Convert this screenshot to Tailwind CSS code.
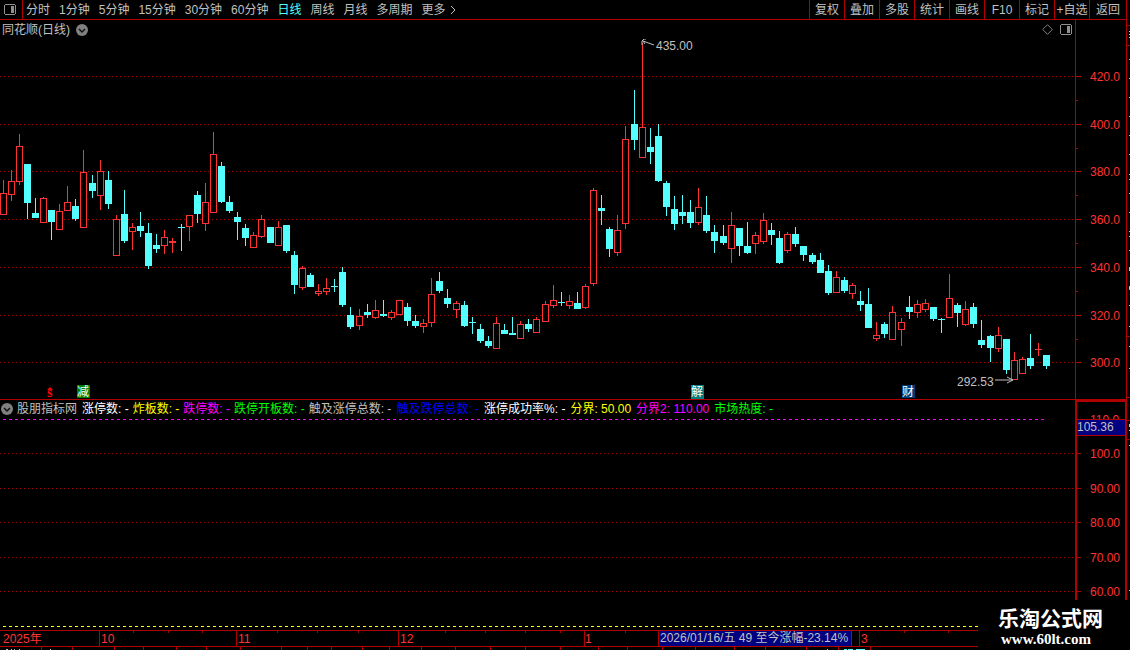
<!DOCTYPE html>
<html lang="zh-CN">
<head>
    <meta charset="UTF-8">
    <meta name="viewport" content="width=device-width, initial-scale=1.0">
    <title>同花顺(日线)</title>
    <script src="https://cdn.jsdelivr.net/npm/@tailwindcss/browser@4"></script>
</head>
<body class="bg-black text-[#c0c0c0] text-[12px] leading-[18px] font-['Liberation_Sans','Noto_Sans_CJK_SC',sans-serif] overflow-hidden">
    <div class="flex min-h-screen">
        <div class="flex-1 min-w-0 flex flex-col">

            <!-- toolbar -->
            <header class="flex justify-between h-5 border-b border-[#b00000] whitespace-nowrap">
                <nav class="flex">
                    <button type="button" aria-label="侧栏" class="w-[23px] pl-1 border-r border-[#b00000]">
                        <svg width="12" height="11" viewBox="0 0 12 11" shape-rendering="crispEdges">
                            <path d="M1 0h10v1h1v9h-1v1h-10v-1h-1v-9h1zM1 1v9h10v-9z" fill="#909090" fill-rule="evenodd"/>
                            <rect x="7" y="2" width="3" height="7" fill="#909090"/>
                        </svg>
                    </button>
                    <div class="flex gap-[9px] pl-[3px]">
                        <button type="button">分时</button>
                        <button type="button">1分钟</button>
                        <button type="button">5分钟</button>
                        <button type="button">15分钟</button>
                        <button type="button">30分钟</button>
                        <button type="button">60分钟</button>
                        <button type="button" class="text-[#54ffff]">日线</button>
                        <button type="button">周线</button>
                        <button type="button">月线</button>
                        <button type="button">多周期</button>
                        <button type="button" class="flex items-center gap-1">更多
                            <svg width="6" height="10" viewBox="0 0 6 10" fill="none" stroke="#c0c0c0"><path d="M1 1l4 4-4 4"/></svg>
                        </button>
                    </div>
                </nav>
                <div class="flex">
                    <button type="button" class="w-[35px] border-l border-[#b00000]">复权</button>
                    <button type="button" class="w-[35px] border-l border-[#b00000]">叠加</button>
                    <button type="button" class="w-[35px] border-l border-[#b00000]">多股</button>
                    <button type="button" class="w-[35px] border-l border-[#b00000]">统计</button>
                    <button type="button" class="w-[35px] border-l border-[#b00000]">画线</button>
                    <button type="button" class="w-[35px] border-l border-[#b00000]">F10</button>
                    <button type="button" class="w-[35px] border-l border-[#b00000]">标记</button>
                    <button type="button" class="w-[35px] border-l border-[#b00000]">+自选</button>
                    <button type="button" class="w-[37px] border-l border-[#b00000]">返回</button>
                </div>
            </header>

            <!-- daily candles -->
            <section class="flex h-[380px] border-b border-[#b00000]">
                <div class="flex-1 min-w-0 flex flex-col">
                    <div class="flex items-center justify-between h-[19px] pl-[2px] pr-[3px]">
                        <div class="flex items-center gap-[6px]">
                            <h1>同花顺(日线)</h1>
                            <button type="button" aria-label="展开">
                                <svg class="block" width="12" height="12" viewBox="0 0 12 12"><circle cx="6" cy="6" r="6" fill="#808080"/><path d="M3 5l3 3 3-3" fill="none" stroke="#111" stroke-width="1.5"/></svg>
                            </button>
                        </div>
                        <div class="flex items-center gap-[7px]">
                            <svg width="11" height="11" viewBox="0 0 11 11" fill="none" stroke="#808080"><path d="M5.5 .7L10.3 5.5 5.5 10.3 .7 5.5z"/></svg>
                            <svg width="12" height="11" viewBox="0 0 12 11" shape-rendering="crispEdges">
                                <path d="M1 0h10v1h1v9h-1v1h-10v-1h-1v-9h1zM1 1v9h10v-9z" fill="#909090" fill-rule="evenodd"/>
                                <rect x="7" y="2" width="3" height="7" fill="#909090"/>
                            </svg>
                        </div>
                    </div>
                    <svg class="block w-full h-[360px]">
                        <defs>
                            <pattern id="dots" width="4" height="1" patternUnits="userSpaceOnUse"><rect width="1" height="1" fill="#b00000"/></pattern>
                        </defs>
                        <g transform="translate(0 -39)" shape-rendering="crispEdges">
                            <g fill="url(#dots)">
                                <rect y="76" width="100%" height="1"/>
                                <rect y="124" width="100%" height="1"/>
                                <rect y="171" width="100%" height="1"/>
                                <rect y="219" width="100%" height="1"/>
                                <rect y="267" width="100%" height="1"/>
                                <rect y="315" width="100%" height="1"/>
                                <rect y="362" width="100%" height="1"/>
                            </g>
                            <g id="candles"></g>
                        </g>
                        <g transform="translate(0 -39)">
                            <g fill="none" stroke="#c0c0c0">
                                <path d="M643 41l11 4M642 45v-4l2-2h2M643 41l2 3"/>
                                <path d="M995 380h18M1007 377l6 3-6 3"/>
                            </g>
                            <g fill="#c0c0c0">
                                <text x="656" y="50">435.00</text>
                                <text x="957" y="386">292.53</text>
                            </g>
                            <path d="M47 390l3-3 3 3z" fill="#ff0000"/>
                            <text x="47" y="397" fill="#ff0000" class="font-['Liberation_Serif',serif] font-bold text-[14px]">s</text>
                            <rect x="77" y="385" width="13" height="13" fill="#008000"/>
                            <rect x="691" y="385" width="13" height="14" fill="#008080"/>
                            <rect x="902" y="385" width="13" height="13" fill="#003c78"/>
                            <g fill="#ffffff">
                                <text x="77" y="396">减</text>
                                <text x="691" y="396">解</text>
                                <text x="902" y="396">财</text>
                            </g>
                        </g>
                    </svg>
                </div>
                <svg class="block w-[51px] h-full border-l border-[#b00000]">
                    <g transform="translate(0 -20)">
                        <path d="M0 76h5v1h-5zM0 124h5v1h-5zM0 171h5v1h-5zM0 219h5v1h-5zM0 267h5v1h-5zM0 315h5v1h-5zM0 362h5v1h-5zM0 100h2v1h-2zM0 148h2v1h-2zM0 195h2v1h-2zM0 243h2v1h-2zM0 291h2v1h-2zM0 339h2v1h-2z" fill="#b00000"/>
                        <g fill="#ff3232">
                            <text x="14" y="81">420.0</text>
                            <text x="14" y="129">400.0</text>
                            <text x="14" y="176">380.0</text>
                            <text x="14" y="224">360.0</text>
                            <text x="14" y="272">340.0</text>
                            <text x="14" y="320">320.0</text>
                            <text x="14" y="367">300.0</text>
                        </g>
                    </g>
                </svg>
            </section>

            <!-- indicator -->
            <section class="flex h-[231px] border-b border-[#b00000]">
                <div class="flex-1 min-w-0 flex flex-col">
                    <div class="flex items-center gap-[5px] h-[17px] pl-px whitespace-nowrap">
                        <div class="flex items-center gap-1">
                            <button type="button" aria-label="展开">
                                <svg class="block" width="12" height="12" viewBox="0 0 12 12"><circle cx="6" cy="6" r="6" fill="#808080"/><path d="M3 5l3 3 3-3" fill="none" stroke="#111" stroke-width="1.5"/></svg>
                            </button>
                            <h2>股朋指标网</h2>
                        </div>
                        <div class="flex gap-1">
                            <span class="text-white">涨停数: -</span>
                            <span class="text-[#ffff00]">炸板数: -</span>
                            <span class="text-[#ff00ff]">跌停数: -</span>
                            <span class="text-[#00ff00]">跌停开板数: -</span>
                            <span>触及涨停总数: -</span>
                        </div>
                        <span class="text-[#0000ff]">触及跌停总数: -</span>
                        <span class="text-white">涨停成功率%: -</span>
                        <span class="text-[#ffff00]">分界: 50.00</span>
                        <span class="text-[#ff00ff]">分界2: 110.00</span>
                        <span class="text-[#00ff00]">市场热度: -</span>
                    </div>
                    <svg class="block w-full h-[213px]" shape-rendering="crispEdges">
                        <defs>
                            <pattern id="magentaDash" x="3" width="6" height="1" patternUnits="userSpaceOnUse"><rect width="3" height="1" fill="#ff00ff"/></pattern>
                            <pattern id="yellowDash" x="3" width="6" height="1" patternUnits="userSpaceOnUse"><rect width="3" height="1" fill="#ffff00"/></pattern>
                        </defs>
                        <g transform="translate(0 -417)">
                            <g fill="url(#dots)">
                                <rect y="453" width="100%" height="1"/>
                                <rect y="488" width="100%" height="1"/>
                                <rect y="522" width="100%" height="1"/>
                                <rect y="557" width="100%" height="1"/>
                                <rect y="591" width="100%" height="1"/>
                            </g>
                            <rect x="3" y="419" width="1041" height="1" fill="url(#magentaDash)"/>
                            <rect x="3" y="626" width="1041" height="1" fill="url(#yellowDash)"/>
                        </g>
                    </svg>
                </div>
                <svg class="block w-[51px] h-full border-l-2 border-t-2 border-r border-[#b00000]">
                    <g transform="translate(0 -402)">
                        <path d="M0 453h4v1h-4zM0 488h4v1h-4zM0 522h4v1h-4zM0 557h4v1h-4zM0 591h4v1h-4z" fill="#b00000"/>
                        <g fill="#ff3232">
                            <text x="13" y="424">110.0</text>
                            <text x="13" y="458">100.0</text>
                            <text x="13" y="493">90.00</text>
                            <text x="13" y="527">80.00</text>
                            <text x="13" y="562">70.00</text>
                            <text x="13" y="596">60.00</text>
                        </g>
                        <rect y="419" width="48" height="17" fill="#b00000"/>
                        <rect y="420" width="48" height="15" fill="#000080"/>
                        <text x="0" y="431" fill="#c0c0c0">105.36</text>
                    </g>
                </svg>
            </section>

            <!-- dates -->
            <svg class="block w-full h-[19px]">
                <g transform="translate(0 -631)">
                    <g fill="#b00000" shape-rendering="crispEdges">
                        <rect y="646" width="100%" height="1"/>
                        <path d="M99 631h1v15h-1zM236 631h1v15h-1zM398 631h1v15h-1zM584 631h1v15h-1zM859 631h1v15h-1z"/>
                        <path d="M133 631h1v2h-1zM168 631h1v2h-1zM202 631h1v2h-1zM277 631h1v2h-1zM317 631h1v2h-1zM358 631h1v2h-1zM445 631h1v2h-1zM485 631h1v2h-1zM525 631h1v2h-1zM560 631h1v2h-1zM625 631h1v2h-1zM904 631h1v2h-1zM948 631h1v2h-1z"/>
                        <path d="M41 647h1v3h-1zM72 647h1v3h-1zM114 647h1v3h-1zM143 647h1v3h-1zM176 647h1v3h-1zM206 647h1v3h-1zM240 647h1v3h-1zM281 647h1v3h-1zM307 647h1v3h-1zM331 647h1v3h-1zM362 647h1v3h-1zM389 647h1v3h-1zM421 647h1v3h-1zM455 647h1v3h-1zM490 647h1v3h-1zM525 647h1v3h-1zM560 647h1v3h-1zM598 647h1v3h-1zM627 647h1v3h-1zM662 647h1v3h-1zM695 647h1v3h-1zM734 647h1v3h-1zM765 647h1v3h-1zM806 647h1v3h-1zM838 647h1v3h-1zM870 647h1v3h-1z"/>
                        <rect x="658" y="631" width="194" height="15"/>
                        <rect x="659" y="631" width="192" height="15" fill="#000080"/>
                        <path d="M6 649h2v1h-2zM11 649h1v1h-1zM14 649h1v1h-1zM19 649h1v1h-1zM50 649h1v1h-1zM827 649h1v1h-1z" fill="#c0c0c0"/>
                        <path d="M844 649h3v1h-3zM848 649h5v1h-5zM856 649h9v1h-9z" fill="#54ffff"/>
                    </g>
                    <g fill="#ff3232">
                        <text x="3" y="643">2025年</text>
                        <text x="101" y="643">10</text>
                        <text x="238" y="643">11</text>
                        <text x="400" y="643">12</text>
                        <text x="585" y="643">1</text>
                        <text x="861" y="643">3</text>
                    </g>
                    <text x="660" y="642" fill="#c0c0c0">2026/01/16/五 49 至今涨幅-23.14%</text>
                </g>
            </svg>
        </div>

        <!-- edge of the quote column -->
        <svg class="block w-1 border-l border-[#b00000]" shape-rendering="crispEdges">
            <path d="M0 25h3v1h-3zM0 45h3v1h-3zM0 336h3v1h-3zM0 397h3v1h-3zM0 420h3v1h-3zM0 439h3v1h-3z" fill="#b00000"/>
            <path d="M2 31h1v1h-1zM2 34h1v1h-1zM2 37h1v1h-1zM2 59h1v1h-1zM2 78h1v1h-1zM2 97h1v1h-1zM2 116h1v1h-1zM2 135h1v1h-1zM2 154h1v1h-1zM2 174h1v1h-1zM2 179h1v1h-1zM2 193h1v1h-1zM2 212h1v1h-1zM2 231h1v1h-1zM2 236h1v1h-1zM2 250h1v1h-1zM2 267h1v4h-1zM2 286h1v4h-1zM2 305h1v1h-1zM2 326h1v1h-1zM2 346h1v1h-1zM2 368h1v1h-1zM2 424h1v3h-1zM2 430h1v1h-1zM2 445h1v1h-1zM2 590h1v1h-1z" fill="#c0c0c0"/>
        </svg>
    </div>

    <a href="#" class="absolute right-0 bottom-0 w-[152px] h-[50px] pl-5 pt-2 bg-black text-white font-bold whitespace-nowrap">
        <span class="block text-[21px] leading-[22px]">乐淘公式网</span>
        <span class="block pl-[3px] text-[15px] leading-[18px] font-['Liberation_Serif',serif]">www.60lt.com</span>
    </a>

    <script>
        // [left, high, body top, body bottom, low, rising]
        const candles = [
            [0,180,193,215,215,1],[8,170,181,195,201,1],[16,134,146,182,185,1],[24,164,164,203,219,0],[32,198,213,218,218,0],
            [40,197,198,223,223,1],[48,210,210,222,240,0],[56,204,211,230,230,1],[64,186,202,211,211,1],[72,199,206,219,221,0],
            [80,150,172,228,228,1],[89,175,183,191,198,0],[97,160,171,196,210,1],[105,171,180,204,209,0],[113,215,219,256,256,1],
            [121,190,214,241,243,0],[129,223,227,232,250,1],[137,212,226,231,237,0],[145,223,233,266,269,0],[153,234,245,249,253,0],
            [161,230,237,246,254,1],[169,238,241,243,253,1],[178,224,227,228,251,0],[186,215,215,227,241,1],[194,191,195,214,223,0],
            [202,183,202,224,231,1],[210,132,154,213,213,1],[218,162,166,202,203,0],[226,196,202,211,213,0],[234,212,217,222,240,0],
            [242,224,228,238,246,0],[250,232,235,248,248,1],[258,215,219,237,238,1],[267,227,227,243,243,0],[275,221,227,246,246,1],
            [283,225,225,251,253,0],[291,251,255,285,294,0],[299,266,268,288,290,1],[307,273,275,287,287,0],[315,284,291,294,296,1],
            [323,278,288,292,295,1],[331,279,286,287,292,0],[339,267,272,305,307,0],[347,307,315,327,329,0],[356,309,316,326,330,1],
            [364,304,312,315,318,0],[372,300,310,318,319,1],[380,300,314,316,317,0],[388,310,312,318,320,1],[396,300,300,315,315,1],
            [404,303,307,321,326,0],[412,315,321,326,328,0],[420,319,323,327,333,1],[428,278,294,323,327,1],[436,272,281,291,293,0],
            [444,289,298,304,308,0],[453,301,303,310,318,1],[461,301,305,326,327,0],[469,317,322,323,334,0],[477,324,329,341,343,0],
            [485,336,341,346,348,0],[493,317,323,349,349,1],[501,324,330,334,334,0],[509,317,333,335,335,0],[517,321,324,339,339,1],
            [525,319,324,329,332,0],[533,317,319,333,333,1],[542,301,304,322,322,1],[550,285,300,306,308,1],[558,292,302,303,306,0],
            [566,295,301,306,309,1],[574,292,303,309,309,0],[582,284,286,308,309,1],[590,188,190,284,286,1],[598,195,208,211,225,0],
            [606,227,229,249,257,0],[614,215,230,253,256,1],[622,126,139,224,229,1],[631,90,124,140,150,0],[639,43,127,158,158,1],
            [647,128,147,152,164,0],[655,124,136,181,182,0],[663,181,183,207,216,0],[671,196,209,224,230,0],[679,195,212,216,224,0],
            [687,200,212,223,228,0],[695,188,207,223,225,1],[703,196,215,231,233,0],[711,225,232,241,253,0],[720,225,236,243,245,0],
            [728,212,225,249,263,1],[736,228,228,246,256,0],[744,222,246,253,254,0],[752,232,235,244,254,1],[760,213,220,242,244,1],
            [768,223,230,235,245,0],[776,231,238,263,264,0],[784,232,234,251,253,1],[792,227,234,244,247,0],[800,246,246,255,261,0],
            [809,253,255,262,264,0],[817,253,260,273,273,0],[825,265,271,293,295,0],[833,271,277,293,293,1],[841,277,280,291,293,0],
            [849,283,285,294,299,1],[857,291,301,305,311,0],[865,288,304,328,328,0],[873,322,335,339,341,1],[881,322,324,334,338,0],
            [889,306,312,340,340,1],[898,318,322,330,346,1],[906,296,307,312,319,0],[914,300,304,313,318,1],[922,299,303,310,312,1],
            [930,307,307,319,321,0],[938,318,319,320,333,0],[946,274,298,318,318,1],[954,303,305,313,327,0],[962,301,309,325,326,1],
            [970,303,307,324,328,0],[978,320,340,345,348,0],[987,335,336,348,362,0],[995,327,335,349,352,1],[1003,339,339,370,374,0],
            [1011,352,360,380,380,1],[1019,357,359,374,374,1],[1027,334,358,366,369,0],[1035,343,349,350,356,1],[1043,355,355,366,369,0]
        ];

        const rect = (x, y, w, h, fill) => `<rect x="${x}" y="${y}" width="${w}" height="${h}" fill="${fill}"/>`;

        document.getElementById('candles').innerHTML = candles.map(([x, high, top, bottom, low, up]) => {
            const color = up ? '#ff3232' : '#54ffff';
            let out = rect(x + 3, high, 1, low - high, color) + rect(x, top, 7, bottom - top, color);
            if (up && bottom - top > 2) {
                out += rect(x + 1, top + 1, 5, bottom - top - 2, '#000000');
            }
            return out;
        }).join('');
    </script>
</body>
</html>
